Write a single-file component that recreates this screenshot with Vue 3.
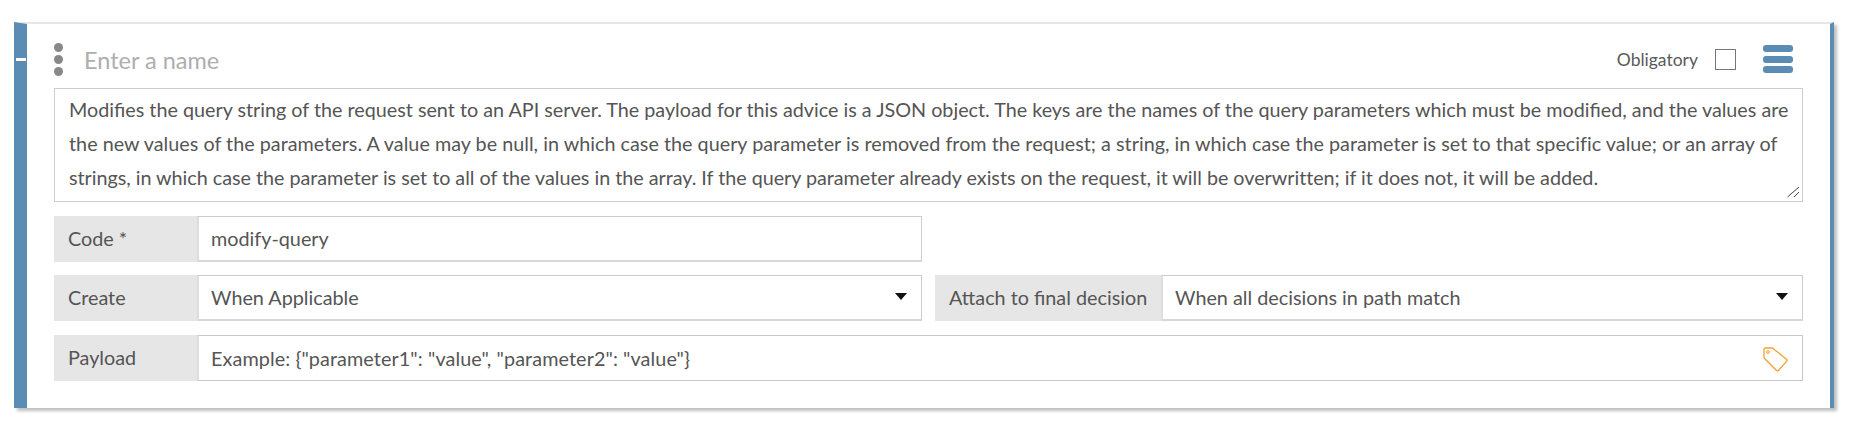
<script setup>
const lines = [
  'Modifies the query string of the request sent to an API server. The payload for this advice is a JSON object. The keys are the names of the query parameters which must be modified, and the values are',
  'the new values of the parameters. A value may be null, in which case the query parameter is removed from the request; a string, in which case the parameter is set to that specific value; or an array of',
  'strings, in which case the parameter is set to all of the values in the array. If the query parameter already exists on the request, it will be overwritten; if it does not, it will be added.'
]
</script>

<template>
  <div class="page">
    <div class="card">
      <span class="collapse"></span>
      <header class="head">
        <span class="dots"><i></i><i></i><i></i></span>
        <span class="name">Enter a name</span>
        <span class="oblig">Obligatory</span>
        <span class="check"></span>
        <span class="burger"><i></i><i></i><i></i></span>
      </header>
      <div class="desc">
        <div v-for="l in lines" :key="l" class="line">{{ l }}</div>
        <svg class="grip" width="14" height="14" viewBox="0 0 14 14">
          <path d="M0.5 11 L12 1 M7 11 L12 6" stroke="#444" stroke-width="1" fill="none" />
        </svg>
      </div>
      <div class="row half">
        <label class="lab">Code *</label>
        <div class="field">modify-query</div>
      </div>
      <div class="split">
        <div class="row">
          <label class="lab">Create</label>
          <div class="field"><span>When Applicable</span><b class="tri"></b></div>
        </div>
        <div class="row">
          <label class="lab wide">Attach to final decision</label>
          <div class="field"><span>When all decisions in path match</span><b class="tri"></b></div>
        </div>
      </div>
      <div class="row">
        <label class="lab">Payload</label>
        <div class="field plain">
          <span class="hint">Example: {"parameter1": "value", "parameter2": "value"}</span>
          <svg class="tag" width="25" height="25" viewBox="0 0 25 25">
            <path d="M1 2.5 Q1 1 2.5 1 L8.5 1 Q9.5 1 10.3 1.7 L23.5 12.2 Q24.5 13.3 23.6 14.4 L15.6 23.2 Q14.5 24.4 13.3 23.3 L1.8 11.8 Q1 11 1 10 Z" fill="none" stroke="#f5a033" stroke-width="1.3"/>
            <circle cx="5" cy="5" r="1.4" fill="none" stroke="#f5a033" stroke-width="1"/>
          </svg>
        </div>
      </div>
    </div>
  </div>
</template>

<style>
body { background: #fff; }
</style>

<style scoped>
.page {
  box-sizing: border-box;
  height: 428px;
  padding: 22px 0 0 14px;
}
.card {
  position: relative;
  box-sizing: border-box;
  width: 1820px;
  height: 386px;
  background: #fff;
  border-left: 13px solid #5b8db4;
  border-right: 4px solid #5b8db4;
  border-top: 2px solid #e6e6e6;
  box-shadow: 3px 3px 3px rgba(0, 0, 0, 0.25);
  padding: 0 27px;
  font-family: "Lato", sans-serif;
  color: #555;
}
.collapse {
  position: absolute;
  left: -11px;
  top: 34px;
  width: 10px;
  height: 3px;
  background: #fff;
}
.head {
  box-sizing: border-box;
  display: flex;
  align-items: center;
  height: 64px;
  padding-top: 6px;
}
.dots {
  display: flex;
  flex-direction: column;
  gap: 3px;
  width: 30px;
}
.dots i {
  display: block;
  width: 9px;
  height: 9px;
  border-radius: 50%;
  background: #888;
}
.name {
  flex: 1;
  padding-top: 1px;
  font-size: 23.5px;
  color: #aeaeae;
}
.oblig {
  font-size: 17.5px;
  color: #5a5a5a;
}
.check {
  box-sizing: border-box;
  width: 21px;
  height: 21px;
  margin: 0 27px 0 17px;
  border: 1px solid #777;
}
.burger {
  display: flex;
  flex-direction: column;
  gap: 3.5px;
  width: 30px;
  margin-right: 10px;
}
.burger i {
  display: block;
  height: 7px;
  border-radius: 3px;
  background: #5b8db4;
}
.desc {
  position: relative;
  box-sizing: border-box;
  height: 114px;
  width: 1749px;
  margin-bottom: 14px;
  padding: 4px 14px;
  border: 1px solid #ccc;
  font-size: 19.75px;
  line-height: 34px;
}
.line { white-space: nowrap; }
.line:nth-child(2) { letter-spacing: 0.02px; }
.line:nth-child(3) { letter-spacing: -0.02px; }
.grip {
  position: absolute;
  right: 1px;
  bottom: 1px;
}
.row {
  display: flex;
  height: 46px;
  width: 1749px;
  font-size: 19.8px;
  line-height: 45px;
}
.half { width: 868px; margin-bottom: 13px; }
.lab {
  box-sizing: border-box;
  width: 143px;
  flex: none;
  padding-left: 14px;
  background: #e6e6e6;
}
.wide { width: 226px; }
.field {
  flex: 1;
  display: flex;
  align-items: center;
  justify-content: space-between;
  box-sizing: border-box;
  padding: 0 14px 0 12px;
  border: 1px solid #ccc;
  border-left: 2px solid #ddd;
  border-bottom: 2px solid #d8d8d8;
}
.plain {
  border-color: #c8c8c8;
  border-bottom-width: 1px;
  border-left-color: #ddd;
}
.hint { letter-spacing: 0.09px; }
.split {
  display: flex;
  gap: 13px;
  width: 1749px;
  margin-bottom: 14px;
}
.split .row { width: 868px; }
.tri {
  width: 0;
  height: 0;
  margin-top: -3px;
  border-left: 6px solid transparent;
  border-right: 6px solid transparent;
  border-top: 7px solid #111;
}
.tag { margin-top: 3px; }
</style>
